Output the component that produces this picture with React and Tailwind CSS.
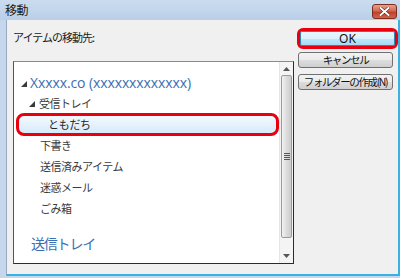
import React from 'react';

const jp = { fontFamily: '"Noto Sans CJK JP", "Noto Sans", sans-serif' };

function Expander({ className = '' }) {
    return (
        <svg width="6" height="6" viewBox="0 0 6 6" className={className}>
            <polygon points="6,0 6,6 0,6" fill="#3a3a3a" />
        </svg>
    );
}

function Button({ children }) {
    return (
        <div className="h-[16px] w-[95px] flex items-center justify-center rounded-[3px] border border-[#707070] bg-[linear-gradient(#f2f2f2_0%,#ebebeb_50%,#dddddd_51%,#cfcfcf_100%)] text-[10.5px] tracking-[-1.4px] text-[#111] leading-none whitespace-nowrap">
            {children}
        </div>
    );
}

export default function App() {
    const folders = ['下書き', '送信済みアイテム', '迷惑メール', 'ごみ箱'];

    return (
        <div className="w-[400px] h-[278px] overflow-hidden bg-[#c4d7ec] flex flex-col" style={jp}>
            {/* title bar */}
            <div className="h-[20px] shrink-0 flex items-center justify-between pl-[5px] pr-[3px] bg-[linear-gradient(#cbdcef,#b9cfe8)]">
                <span className="text-[12px] text-[#1a1a1a] tracking-[-0.5px] leading-none">移動</span>
                <div className="w-[25px] h-[15px] mt-[2px] rounded-[3px] border border-[#7a2e22] flex items-center justify-center bg-[linear-gradient(#e8a08e_0%,#d36a52_45%,#c0402a_55%,#d0624a_100%)]">
                    <svg width="11" height="9" viewBox="0 0 11 9">
                        <path d="M1.5 1 L9.5 8 M9.5 1 L1.5 8" stroke="#5a1a10" strokeWidth="3" strokeLinecap="square" />
                        <path d="M1.5 1 L9.5 8 M9.5 1 L1.5 8" stroke="#ffffff" strokeWidth="2" strokeLinecap="square" />
                    </svg>
                </div>
            </div>

            {/* window body */}
            <div className="flex-1 flex pl-[6px] pr-[1px] pb-[2px]">
                <div className="flex-1 flex bg-[#f0f0f0] border-l border-[#9aa9bb] border-r-[2px] border-r-[#38b2e3] border-b-[2px] border-b-[#38b2e3]">
                    {/* left column */}
                    <div className="flex flex-col pl-[6px] pt-[10px]">
                        <div className="h-[14px] text-[11px] leading-[14px] tracking-[-1px] text-[#1a1a1a]">アイテムの移動先:</div>
                        <div className="mt-[17px] w-[281px] h-[203px] flex bg-white border border-[#2b2b2b] border-t-[#8a8a8a] border-l-[#555]">
                            <div className="flex-1 flex flex-col pt-[10px]">
                                <div className="h-[21px] flex items-center pl-[7px] gap-[3px]">
                                    <Expander className="mt-[2px]" />
                                    <span className="text-[14px] leading-none text-[#3b6fb3] tracking-[-0.1px]" style={{ fontFamily: '"Open Sans", "Noto Sans", sans-serif' }}>Xxxxx.co (xxxxxxxxxxxxx)</span>
                                </div>
                                <div className="h-[21px] flex items-center pl-[15px] gap-[4px]">
                                    <Expander className="mt-[1px]" />
                                    <span className="text-[11px] leading-none text-[#3a3a3a] tracking-[-0.5px]">受信トレイ</span>
                                </div>
                                <div className="h-[21px] flex items-center">
                                    <div className="ml-[2px] w-[263px] h-[23px] rounded-[8px] border-[3px] border-[#e8000f] flex items-center bg-[linear-gradient(#f3f9fe,#d6ebfb)]">
                                        <span className="pl-[29px] text-[11px] leading-none text-[#222] tracking-[-0.3px]">ともだち</span>
                                    </div>
                                </div>
                                {folders.map((f) => (
                                    <div key={f} className="h-[21px] flex items-center pl-[26px]">
                                        <span className="text-[11px] leading-none text-[#3a3a3a] tracking-[-0.5px]">{f}</span>
                                    </div>
                                ))}
                                <div className="h-[21px] mt-[13px] flex items-center pl-[17px]">
                                    <span className="text-[14px] leading-none text-[#3b6fb3] tracking-[-1.2px]">送信トレイ</span>
                                </div>
                            </div>

                            {/* scrollbar */}
                            <div className="w-[15px] flex flex-col bg-[#f4f4f4] border-l border-[#e6e6e6]">
                                <div className="h-[13px] flex items-center justify-center">
                                    <svg width="7" height="4" viewBox="0 0 7 4"><polygon points="3.5,0 7,4 0,4" fill="#555" /></svg>
                                </div>
                                <div className="h-[163px] mx-[1px] rounded-[2px] border border-[#9a9a9a] bg-[linear-gradient(90deg,#f2f2f2,#dcdcdc_50%,#cdcdcd)] flex items-center justify-center">
                                    <div className="flex flex-col gap-[1px]">
                                        <div className="w-[6px] h-[1px] bg-[#555]" />
                                        <div className="w-[6px] h-[1px] bg-[#555]" />
                                        <div className="w-[6px] h-[1px] bg-[#555]" />
                                        <div className="w-[6px] h-[1px] bg-[#555]" />
                                    </div>
                                </div>
                                <div className="flex-1 flex items-end justify-center pb-[5px]">
                                    <svg width="7" height="4" viewBox="0 0 7 4"><polygon points="0,0 7,0 3.5,4" fill="#555" /></svg>
                                </div>
                            </div>
                        </div>
                    </div>

                    {/* right column */}
                    <div className="flex flex-col pl-[4px] pt-[8px] gap-[6px]">
                        <div className="w-[101px] h-[21px] rounded-[6px] border-[3px] border-[#e8000f] flex items-center justify-center -ml-[1px] -mb-[3px]">
                            <div className="w-[95px] h-[15px] flex items-center justify-center rounded-[2px] border border-[#3c7fb1] bg-[linear-gradient(#eaf6fd_0%,#d9f0fc_50%,#bee6fd_51%,#a7d9f5_100%)] text-[12px] leading-none text-[#111]" style={{ fontFamily: '"Noto Sans", sans-serif' }}>
                                OK
                            </div>
                        </div>
                        <Button>キャンセル</Button>
                        <Button>フォルダーの作成(N)</Button>
                    </div>
                </div>
            </div>
        </div>
    );
}
